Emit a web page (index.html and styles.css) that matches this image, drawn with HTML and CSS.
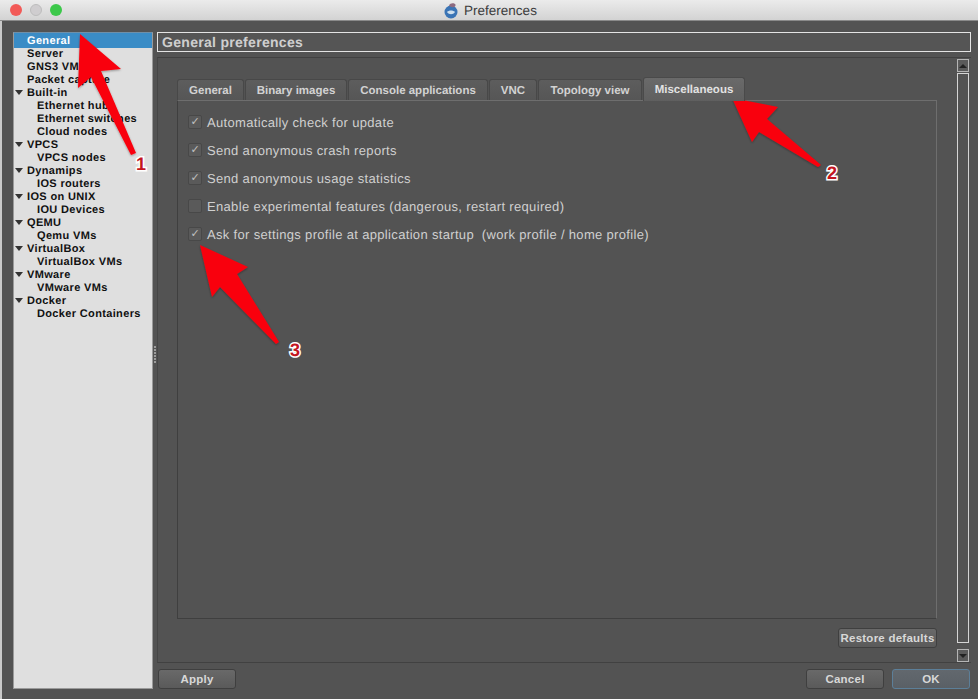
FILE: index.html
```html
<!DOCTYPE html>
<html lang="en">
<head>
<meta charset="utf-8">
<title>Preferences</title>
<link rel="stylesheet" href="styles.css">
</head>
<body>
<div class="window">
  <header class="titlebar">
    <div class="lights"><i class="light red"></i><i class="light gray"></i><i class="light green"></i></div>
    <div class="title">
      <svg class="appicon" width="15" height="17" viewBox="0 0 15 17"><circle cx="7" cy="10" r="6.5" fill="#3a74b5"/><path d="M5 3.5C6 .8 10 .4 11.5 2.5 12 4 10.5 5.5 8.5 5.2 7 5 6 4.6 5 3.5Z" fill="#8c6a80"/><path d="M3 10c2-2 6-2 8 0-2 3-6 3-8 0Z" fill="#cfe0ee"/></svg>
      <span>Preferences</span>
    </div>
  </header>
  <main class="main">
    <nav class="tree">
      <div class="row leaf sel">General</div>
      <div class="row leaf">Server</div>
      <div class="row leaf">GNS3 VM</div>
      <div class="row leaf">Packet capture</div>
      <div class="row group">Built-in</div>
      <div class="row sub">Ethernet hubs</div>
      <div class="row sub">Ethernet switches</div>
      <div class="row sub">Cloud nodes</div>
      <div class="row group">VPCS</div>
      <div class="row sub">VPCS nodes</div>
      <div class="row group">Dynamips</div>
      <div class="row sub">IOS routers</div>
      <div class="row group">IOS on UNIX</div>
      <div class="row sub">IOU Devices</div>
      <div class="row group">QEMU</div>
      <div class="row sub">Qemu VMs</div>
      <div class="row group">VirtualBox</div>
      <div class="row sub">VirtualBox VMs</div>
      <div class="row group">VMware</div>
      <div class="row sub">VMware VMs</div>
      <div class="row group">Docker</div>
      <div class="row sub">Docker Containers</div>
    </nav>
    <div class="splitter"><i></i><i></i><i></i><i></i><i></i><i></i></div>
    <section class="content">
      <h1 class="heading">General preferences</h1>
      <div class="frame">
        <div class="pane">
          <div class="tabs">
            <div class="tab t1">General</div>
            <div class="tab t2">Binary images</div>
            <div class="tab t3">Console applications</div>
            <div class="tab t4">VNC</div>
            <div class="tab t5">Topology view</div>
            <div class="tab active t6">Miscellaneous</div>
          </div>
          <div class="panel">
            <label class="check"><span class="box on">✓</span>Automatically check for update</label>
            <label class="check"><span class="box on">✓</span>Send anonymous crash reports</label>
            <label class="check"><span class="box on">✓</span>Send anonymous usage statistics</label>
            <label class="check"><span class="box"></span>Enable experimental features (dangerous, restart required)</label>
            <label class="check"><span class="box on">✓</span>Ask for settings profile at application startup&nbsp; (work profile / home profile)</label>
          </div>
          <div class="restore-row"><button class="btn restore">Restore defaults</button></div>
        </div>
        <div class="scrollbar">
          <div class="sb-btn"><svg width="8" height="4" viewBox="0 0 8 4"><path d="M4 0l4 4H0Z" fill="#222"/></svg></div>
          <div class="sb-track"></div>
          <div class="sb-btn"><svg width="8" height="4" viewBox="0 0 8 4"><path d="M0 0h8L4 4Z" fill="#222"/></svg></div>
        </div>
      </div>
      <footer class="actions">
        <button class="btn wide">Apply</button>
        <div class="right">
          <button class="btn wide">Cancel</button>
          <button class="btn wide ok">OK</button>
        </div>
      </footer>
    </section>
  </main>
</div>
<svg class="overlay" width="978" height="699" viewBox="0 0 978 699">
  <defs>
    <filter id="sh" x="-20%" y="-20%" width="140%" height="140%"><feDropShadow dx="0" dy="1" stdDeviation="1" flood-color="#000" flood-opacity=".35"/></filter>
  </defs>
  <g fill="#f9000f" filter="url(#sh)">
    <polygon points="80,34 121,69 101,71 136,153 131,155 91,77 78,88"/>
    <polygon points="732,98 778,107 767,119 821,165 818,167 759,132 752,142"/>
    <polygon points="200,245 248,267 237,274 279,342 276,344 220,287 212,297"/>
  </g>
  <g class="num">
    <text x="141" y="170">1</text>
    <text x="832" y="179">2</text>
    <text x="295" y="356">3</text>
  </g>
</svg>
</body>
</html>
```
FILE: styles.css
```css
* { box-sizing: border-box; }
html, body { margin: 0; padding: 0; width: 978px; height: 699px; overflow: hidden; }
body { background: #c9c9c9; font-family: "Liberation Sans", Arial, sans-serif; position: relative; text-rendering: geometricPrecision; }
.window { height: 699px; margin-left: 2px; display: flex; flex-direction: column; background: #535353; }
.titlebar { height: 21px; margin-left: -2px; flex: none; background: linear-gradient(#ebebeb, #d3d3d3); border-bottom: 1px solid #8a8a8a; position: relative; display: flex; justify-content: center; align-items: center; }
.lights { position: absolute; left: 10px; top: 4px; display: flex; gap: 8px; }
.light { display: block; width: 12px; height: 12px; border-radius: 50%; }
.red { background: #f25a57; }
.gray { background: #cfcdcf; border: 1px solid #bdbdbd; }
.green { background: #3cc84a; }
.title { display: flex; align-items: center; gap: 5px; font-size: 13.5px; color: #3c3c3c; margin-left: 3px; }
.appicon { display: block; }
.main { flex: 1; display: flex; padding: 11px 7px 10px 11px; min-height: 0; }
.tree { width: 140px; flex: none; background: #dfdfdf; border: 1px solid #9a9a9a; border-top-color: #6f8fa8; font-size: 11px; font-weight: 700; color: #111; letter-spacing: .35px; }
.row { height: 13px; line-height: 15px; white-space: nowrap; position: relative; }
.leaf { padding-left: 13px; }
.sel { height: 15px; line-height: 16px; margin-bottom: -1px; background: #3a8cc6; color: #fff; }
.group { padding-left: 13px; }
.group::before { content: ""; position: absolute; left: 1px; top: 4px; border-left: 4px solid transparent; border-right: 4px solid transparent; border-top: 5px solid #333; }
.sub { padding-left: 23px; }
.splitter { width: 4px; flex: none; display: flex; flex-direction: column; justify-content: center; gap: 1px; align-items: center; padding-bottom: 12px; }
.splitter i { display: block; width: 2px; height: 2px; background: #9d9d9d; }
.content { flex: 1; display: flex; flex-direction: column; min-width: 0; }
.heading { margin: 0; height: 20px; line-height: 18px; padding-left: 4px; border: 1px solid #e4e4e4; color: #cfcfcf; font-size: 14px; font-weight: 700; letter-spacing: .3px; background: #555; }
.frame { margin-top: 5px; height: 606px; flex: none; display: flex; border-top: 1px solid #414141; border-left: 1px solid #464646; border-bottom: 1px solid #414141; background: #535353; }
.pane { width: 799px; flex: none; padding: 19px 0 0 19px; display: flex; flex-direction: column; }
.tabs { display: flex; height: 24px; align-items: flex-end; position: relative; z-index: 1; margin-bottom: -1px; gap: 1px; }
.tab { height: 21px; line-height: 22px; text-align: center; font-size: 11.5px; font-weight: 700; color: #d2d2d2; background: linear-gradient(#5d5d5d, #565656); border: 1px solid #484848; border-bottom: 0; border-radius: 3px 3px 0 0; white-space: nowrap; margin-bottom: 1px; }
.t1 { width: 67px; }
.t2 { width: 102px; }
.t3 { width: 140px; }
.t4 { width: 48px; }
.t5 { width: 104px; }
.t6 { width: 102px; }
.active { height: 24px; line-height: 24px; margin-bottom: 0; background: linear-gradient(#6a6a6a, #5f5f5f); border-color: #4a4a4a; color: #e2e2e2; }
.panel { width: 760px; height: 519px; border: 1px solid #6e6e6e; border-left-color: #3f3f3f; border-bottom-color: #3f3f3f; padding-top: 7px; display: flex; flex-direction: column; }
.check { height: 28px; display: flex; align-items: center; padding-left: 10px; font-size: 13px; letter-spacing: .33px; color: #d0d0d0; white-space: nowrap; }
.box { width: 14px; height: 14px; margin-right: 5px; flex: none; border: 1px solid #484848; border-radius: 2px; background: #5a5a5a; font-family: "DejaVu Sans", sans-serif; font-size: 11px; line-height: 12px; text-align: center; letter-spacing: 0; color: #c0c0c0; }
.restore-row { display: flex; justify-content: flex-end; width: 760px; padding-top: 9px; }
.btn { font-family: inherit; font-weight: 700; font-size: 11.5px; letter-spacing: .25px; color: #d8d8d8; height: 20px; padding: 0; border: 1px solid #3f3f3f; border-radius: 3px; background: linear-gradient(#696969, #5a5a5a); }
.restore { width: 99px; }
.scrollbar { margin: 1px 0 0 0; width: 12px; flex: none; display: flex; flex-direction: column; }
.sb-btn { height: 13px; flex: none; border: 1px solid #b5b5b5; background: #5a5a5a; display: flex; align-items: center; justify-content: center; }
.sb-track { flex: 1; margin: 1px 0 6px; border: 1px solid #d5d5d5; }
.actions { flex: 1; display: flex; justify-content: space-between; align-items: flex-end; padding: 0 1px; }
.right { display: flex; gap: 8px; }
.wide { width: 78px; }
.ok { background: linear-gradient(#62686e, #5a6066); border-color: #5c7f99; }
.overlay { position: absolute; left: 0; top: 0; pointer-events: none; }
.num text { font-family: "Liberation Sans", Arial, sans-serif; font-weight: 700; font-size: 18px; text-anchor: middle; fill: #c4161f; stroke: #fff; stroke-width: 3px; paint-order: stroke; }
```
